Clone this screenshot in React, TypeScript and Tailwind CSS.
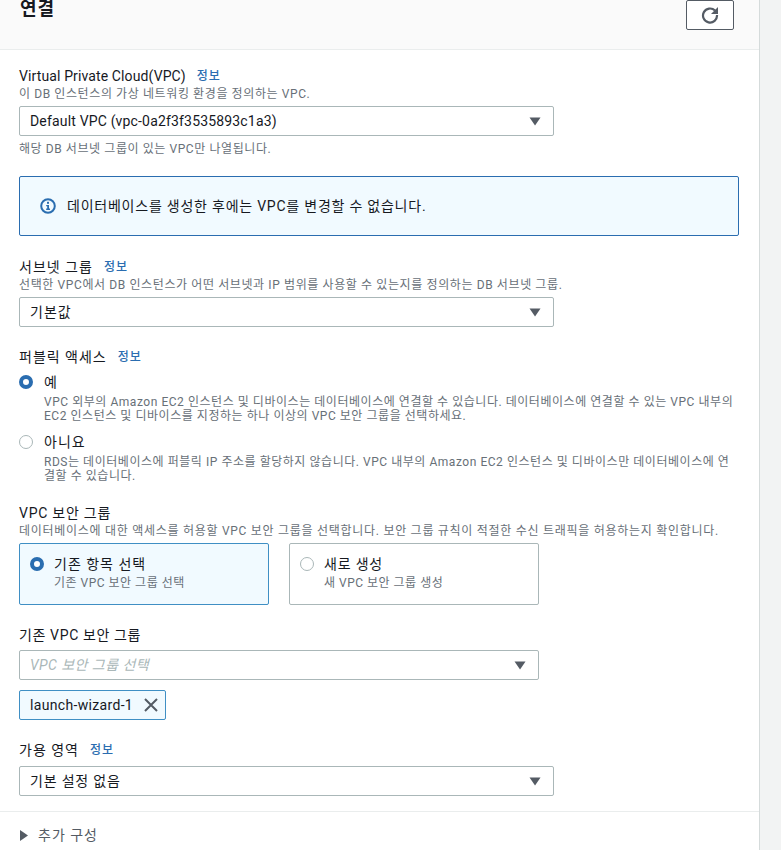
const font = "font-['Roboto','Noto_Sans_CJK_KR',sans-serif]";

function Info() {
  return <span className="ml-[11px] text-[12px] font-medium tracking-[1px] text-[#2a6db0]">정보</span>;
}

function Caret() {
  return (
    <svg className="w-[12px] h-[9px] shrink-0" viewBox="0 0 12 9">
      <path d="M0.5 0.5H11.5L6 8.5Z" fill="#545b64" />
    </svg>
  );
}

function Select({ text, width, tracking, placeholder }: { text: string; width: string; tracking: string; placeholder?: boolean }) {
  return (
    <div className={`${width} h-[30px] flex items-center justify-between border border-[#aab7b8] rounded-[2px] pl-[10px] pr-[12px] bg-white`}>
      <span className={`${tracking} ${placeholder ? "text-[14px] italic text-[#aab7b8]" : "text-[14px] text-[#16191f]"}`}>{text}</span>
      <Caret />
    </div>
  );
}

function Radio({ on }: { on?: boolean }) {
  return on ? (
    <span className="block w-[14px] h-[14px] rounded-full border-[4px] border-[#2a6db0] bg-white shrink-0" />
  ) : (
    <span className="block w-[14px] h-[14px] rounded-full border border-[#aab7b8] bg-white shrink-0" />
  );
}

function Label({ children, tracking }: { children: React.ReactNode; tracking: string }) {
  return <div className={`h-[18px] pt-px leading-[18px] text-[14px] text-[#16191f] flex items-center ${tracking}`}>{children}</div>;
}

function Desc({ children, tracking }: { children: React.ReactNode; tracking: string }) {
  return <div className={`h-4 pt-px leading-4 mt-px text-[12px] text-[#687078] whitespace-nowrap ${tracking}`}>{children}</div>;
}

export default function App() {
  return (
    <div className={`${font} flex h-[850px] w-[781px] overflow-hidden bg-[#f2f3f3]`}>
      <div className="w-[760px] h-[850px] bg-white border-r border-[#d5dbdb]">
        {/* header */}
        <div className="h-[50px] bg-[#fafafa] border-b border-[#eaeded] flex justify-between pl-[20px] pr-[25px]">
          <h2 className="text-[18px] leading-[18px] font-bold tracking-[1px] text-[#16191f]">연결</h2>
          <div className="w-[48px] h-[30px] border border-[#545b64] rounded-[2px] bg-white flex items-center justify-center">
            <svg className="w-[18px] h-[18px]" viewBox="0 0 18 18" fill="none">
              <path d="M14 4.6A7 7 0 1 0 16 9" stroke="#545b64" strokeWidth="2.2" />
              <path d="M17 1V8H10Z" fill="#545b64" />
            </svg>
          </div>
        </div>

        <div className="pl-[19px] pr-[20px] pt-4">
          <Label tracking="tracking-[0.12px]">Virtual Private Cloud(VPC)<Info /></Label>
          <Desc tracking="tracking-[0.6px]">이 DB 인스턴스의 가상 네트워킹 환경을 정의하는 VPC.</Desc>
          <div className="mt-[5px]"><Select text="Default VPC (vpc-0a2f3f3535893c1a3)" width="w-[535px]" tracking="tracking-[0.17px]" /></div>
          <div className="h-4 pt-px leading-4 mt-1 text-[12px] tracking-[0.58px] text-[#687078]">해당 DB 서브넷 그룹이 있는 VPC만 나열됩니다.</div>

          <div className="mt-5 h-[60px] border border-[#2a6db0] rounded-[2px] bg-[#f1faff] flex items-center pl-[20px]">
            <svg className="w-[16px] h-[16px] shrink-0" viewBox="0 0 16 16" fill="none">
              <circle cx="8" cy="8" r="6.8" stroke="#2a6db0" strokeWidth="2" />
              <path d="M6.2 7H9V10.6H10V12H6.2V10.6H7.2V8.2H6.2Z" fill="#2a6db0" />
              <rect x="7" y="3.8" width="2" height="2" fill="#2a6db0" />
            </svg>
            <span className="ml-[11px] text-[14px] tracking-[0.77px] text-[#16191f]">데이터베이스를 생성한 후에는 VPC를 변경할 수 없습니다.</span>
          </div>

          <div className="mt-[21px]"><Label tracking="tracking-[1px]">서브넷 그룹<Info /></Label></div>
          <Desc tracking="tracking-[0.61px]">선택한 VPC에서 DB 인스턴스가 어떤 서브넷과 IP 범위를 사용할 수 있는지를 정의하는 DB 서브넷 그룹.</Desc>
          <div className="mt-[5px]"><Select text="기본값" width="w-[535px]" tracking="tracking-[1px]" /></div>

          <div className="mt-5"><Label tracking="tracking-[1px]">퍼블릭 액세스<Info /></Label></div>
          <div className="mt-2 flex">
            <div className="pt-[2px]"><Radio on /></div>
            <div className="ml-[11px] flex-1">
              <div className="h-[18px] leading-[18px] text-[14px] text-[#16191f]">예</div>
              <div className="mt-[3px] pt-px text-[12px] leading-[14px] tracking-[0.54px] text-[#687078] whitespace-nowrap">
                VPC 외부의 Amazon EC2 인스턴스 및 디바이스는 데이터베이스에 연결할 수 있습니다. 데이터베이스에 연결할 수 있는 VPC 내부의<br />
                EC2 인스턴스 및 디바이스를 지정하는 하나 이상의 VPC 보안 그룹을 선택하세요.
              </div>
            </div>
          </div>
          <div className="mt-[10px] flex">
            <div className="pt-[2px]"><Radio /></div>
            <div className="ml-[11px] flex-1">
              <div className="h-[18px] leading-[18px] text-[14px] tracking-[1px] text-[#16191f]">아니요</div>
              <div className="mt-[3px] pt-px text-[12px] leading-[14px] tracking-[0.54px] text-[#687078] whitespace-nowrap">
                RDS는 데이터베이스에 퍼블릭 IP 주소를 할당하지 않습니다. VPC 내부의 Amazon EC2 인스턴스 및 디바이스만 데이터베이스에 연<br />
                결할 수 있습니다.
              </div>
            </div>
          </div>

          <div className="mt-[20px]"><Label tracking="tracking-[0.75px]">VPC 보안 그룹</Label></div>
          <Desc tracking="tracking-[0.72px]">데이터베이스에 대한 액세스를 허용할 VPC 보안 그룹을 선택합니다. 보안 그룹 규칙이 적절한 수신 트래픽을 허용하는지 확인합니다.</Desc>
          <div className="mt-[5px] flex gap-[20px]">
            <div className="w-[250px] h-[62px] border border-[#3f8fc4] rounded-[2px] bg-[#f1faff] flex pl-[10px] pt-[11px]">
              <div className="pt-[2px]"><Radio on /></div>
              <div className="ml-[10px]">
                <div className="h-[18px] leading-[18px] text-[14px] tracking-[1px] text-[#16191f]">기존 항목 선택</div>
                <div className="h-4 pt-px leading-4 mt-px text-[12px] tracking-[0.5px] text-[#687078]">기존 VPC 보안 그룹 선택</div>
              </div>
            </div>
            <div className="w-[250px] h-[62px] border border-[#aab7b8] rounded-[2px] bg-white flex pl-[10px] pt-[11px]">
              <div className="pt-[2px]"><Radio /></div>
              <div className="ml-[10px]">
                <div className="h-[18px] leading-[18px] text-[14px] tracking-[0.8px] text-[#16191f]">새로 생성</div>
                <div className="h-4 pt-px leading-4 mt-px text-[12px] tracking-[0.5px] text-[#687078]">새 VPC 보안 그룹 생성</div>
              </div>
            </div>
          </div>

          <div className="mt-5"><Label tracking="tracking-[0.63px]">기존 VPC 보안 그룹</Label></div>
          <div className="mt-[7px]"><Select text="VPC 보안 그룹 선택" width="w-[520px]" tracking="tracking-[0.45px]" placeholder /></div>
          <div className="mt-[10px] w-[147px] h-[30px] border border-[#3f8fc4] rounded-[2px] bg-[#f1faff] flex items-center pl-[10px]">
            <span className="text-[14px] tracking-[0.33px] text-[#16191f]">launch-wizard-1</span>
            <svg className="w-[14px] h-[14px] ml-auto mr-[7px]" viewBox="0 0 14 14" fill="none">
              <path d="M1 1L13 13M13 1L1 13" stroke="#545b64" strokeWidth="2" />
            </svg>
          </div>

          <div className="mt-5"><Label tracking="tracking-[1px]">가용 영역<Info /></Label></div>
          <div className="mt-2"><Select text="기본 설정 없음" width="w-[535px]" tracking="tracking-[0.8px]" /></div>
        </div>

        <div className="mt-[15px] border-t border-[#eaeded] pl-[20px] pt-[14px] flex items-center gap-[10px]">
          <svg className="w-[8px] h-[11px]" viewBox="0 0 8 11">
            <path d="M0 0L8 5.5L0 11Z" fill="#545b64" />
          </svg>
          <span className="h-[18px] leading-[18px] text-[14px] tracking-[1px] text-[#545b64]">추가 구성</span>
        </div>
      </div>
    </div>
  );
}
